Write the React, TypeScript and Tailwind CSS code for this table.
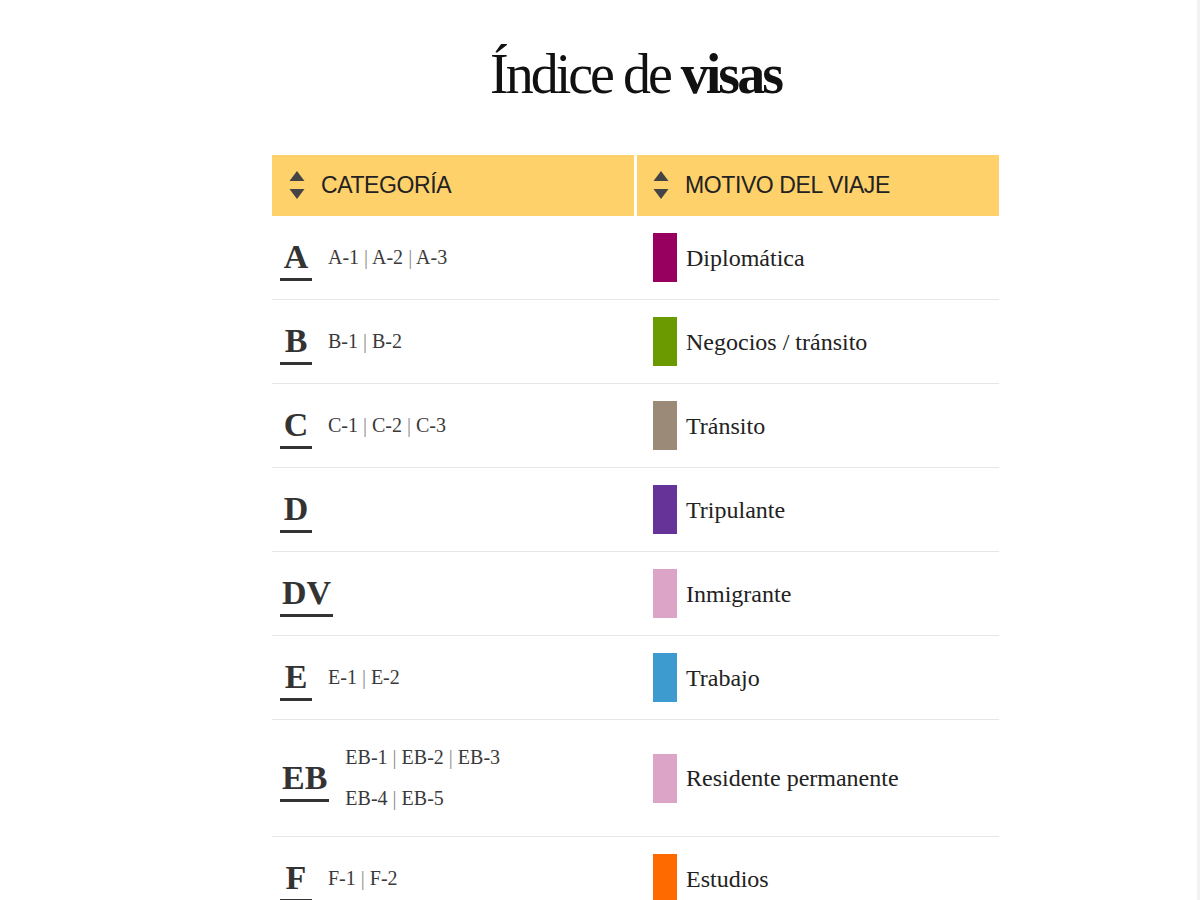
const serif = "font-['Liberation_Serif','Times_New_Roman',serif]";

type Visa = {
  code: string;
  subs: string[][];
  motive: string;
  color: string;
};

const visas: Visa[] = [
  { code: "A", subs: [["A-1", "A-2", "A-3"]], motive: "Diplomática", color: "bg-[#97005f]" },
  { code: "B", subs: [["B-1", "B-2"]], motive: "Negocios / tránsito", color: "bg-[#6a9a00]" },
  { code: "C", subs: [["C-1", "C-2", "C-3"]], motive: "Tránsito", color: "bg-[#9b8a77]" },
  { code: "D", subs: [], motive: "Tripulante", color: "bg-[#663399]" },
  { code: "DV", subs: [], motive: "Inmigrante", color: "bg-[#dca5c7]" },
  { code: "E", subs: [["E-1", "E-2"]], motive: "Trabajo", color: "bg-[#3d9bd0]" },
  { code: "EB", subs: [["EB-1", "EB-2", "EB-3"], ["EB-4", "EB-5"]], motive: "Residente permanente", color: "bg-[#dca5c7]" },
  { code: "F", subs: [["F-1", "F-2"]], motive: "Estudios", color: "bg-[#ff6a00]" },
];

function SortIcon() {
  return (
    <svg width="16" height="29" viewBox="0 0 16 29" className="shrink-0">
      <path d="M8 0 L15.5 10 L0.5 10 Z" fill="#444" />
      <path d="M0.5 18 L15.5 18 L8 28 Z" fill="#444" />
    </svg>
  );
}

function SubLine({ items }: { items: string[] }) {
  return (
    <div className="whitespace-pre">
      {items.map((s, i) => (
        <span key={s}>
          {i > 0 && <span className="text-[#8a8a8a]"> | </span>}
          {s}
        </span>
      ))}
    </div>
  );
}

export default function App() {
  return (
    <div className="min-h-screen bg-white border-r-[3px] border-r-[#f2f2f2]">
      <div className="flex justify-center pl-[74px]">
        <div className="w-[727px] flex flex-col">
          <h1 className={`${serif} text-[56px] leading-none tracking-[-3px] text-[#111] text-center mt-[46px] mb-[53px]`}>
            Índice de <span className="font-bold">visas</span>
          </h1>

          <div className="grid grid-cols-[362px_3px_362px] h-[61px] font-['Liberation_Sans',Arial,sans-serif] text-[23px] tracking-[-0.4px] text-[#222]">
            <div className="bg-[#fed16b] flex items-center gap-[16px] pl-[17px]">
              <SortIcon />
              <span>CATEGORÍA</span>
            </div>
            <div className="bg-white" />
            <div className="bg-[#fed16b] flex items-center gap-[16px] pl-[16px]">
              <SortIcon />
              <span>MOTIVO DEL VIAJE</span>
            </div>
          </div>

          {visas.map((v) => (
            <div key={v.code} className={`${serif} grid grid-cols-[365px_362px] border-b border-[#e6e6e6] text-[#333]`}>
              <div className="flex items-center gap-[16px] pl-[8px] py-[17px]">
                <span className="inline-block min-w-[32px] px-[2px] text-center text-[34px] leading-[34px] font-bold border-b-[3px] border-[#333] pb-[4px] mt-[6px]">
                  {v.code}
                </span>
                {v.subs.length > 0 && (
                  <div className="text-[20px] leading-[41px] text-[#3a3a3a]">
                    {v.subs.map((line, i) => (
                      <SubLine key={i} items={line} />
                    ))}
                  </div>
                )}
              </div>
              <div className="flex items-center gap-[9px] pl-[16px] py-[17px]">
                <div className={`w-[24px] h-[49px] shrink-0 ${v.color}`} />
                <span className="text-[24px] text-[#222]">{v.motive}</span>
              </div>
            </div>
          ))}
        </div>
      </div>
    </div>
  );
}
